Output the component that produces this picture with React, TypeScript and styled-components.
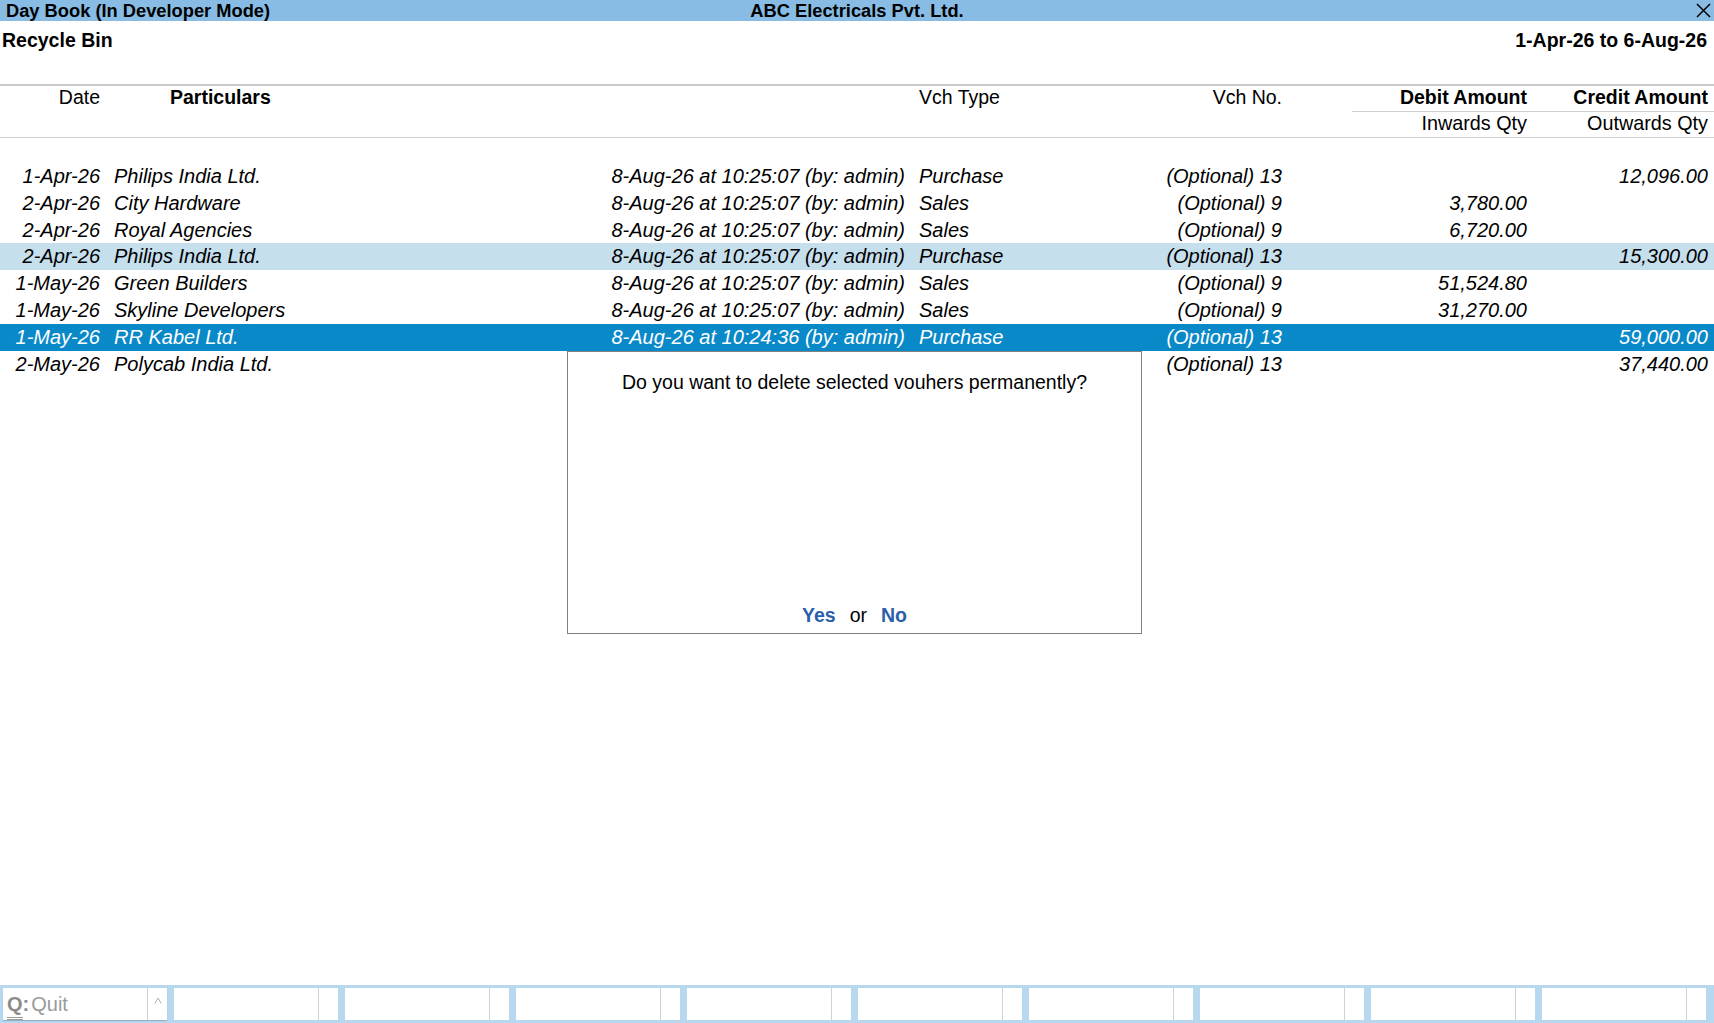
import React from "react";
import styled, { createGlobalStyle } from "styled-components";

const GlobalStyle = createGlobalStyle`
  html, body { margin: 0; padding: 0; background: #ffffff; }
  body { font-family: "Liberation Sans", Arial, sans-serif; color: #000; }
  * { box-sizing: border-box; }
`;

const COLS = "100px 440px 365px 195px 182px 70px 175px 187px";

const Page = styled.div`
  position: relative;
  width: 1714px;
  height: 1023px;
  display: flex;
  flex-direction: column;
  overflow: hidden;
  background: #fff;
`;

const TitleBar = styled.div`
  height: 21px;
  flex: none;
  background: #88bce4;
  display: grid;
  grid-template-columns: 1fr auto 1fr;
  align-items: center;
  font-weight: bold;
  font-size: 18.3px;
  line-height: 21px;
  white-space: nowrap;
`;

const TitleLeft = styled.div`
  padding-left: 6px;
`;

const TitleCenter = styled.div``;

const TitleRight = styled.div`
  display: flex;
  justify-content: flex-end;
  align-items: center;
  padding-right: 3px;
  height: 21px;
`;

const SubHeader = styled.div`
  flex: none;
  height: 65px;
  padding: 8px 7px 0 2px;
  display: flex;
  justify-content: space-between;
  align-items: flex-start;
  font-weight: bold;
  font-size: 19.5px;
  line-height: 22px;
  border-bottom: 2px solid #c8c8c8;
`;

const HeadRow = styled.div`
  flex: none;
  display: grid;
  grid-template-columns: ${COLS};
  height: 25px;
  font-size: 19.5px;
  line-height: 22px;
  white-space: nowrap;
`;

const SubHeadRow = styled.div`
  flex: none;
  display: grid;
  grid-template-columns: ${COLS};
  height: 27px;
  font-size: 19.8px;
  line-height: 22px;
  white-space: nowrap;
  border-bottom: 1px solid #cfcfcf;
`;

type CellProps = { $align?: "left" | "right"; $pl?: number; $pr?: number; $bold?: boolean; $col?: number; $rule?: boolean };

const Cell = styled.div<CellProps>`
  text-align: ${(p) => p.$align || "left"};
  padding-left: ${(p) => p.$pl || 0}px;
  padding-right: ${(p) => p.$pr || 0}px;
  font-weight: ${(p) => (p.$bold ? "bold" : "normal")};
  ${(p) => (p.$col ? `grid-column: ${p.$col};` : "")}
  ${(p) => (p.$rule ? "border-top: 1px solid #cfcfcf;" : "")}
  overflow: visible;
`;

const Body = styled.div`
  flex: 1;
  padding-top: 25px;
  display: flex;
  flex-direction: column;
`;

type RowKind = "plain" | "hover" | "selected";

const Row = styled.div<{ $kind: RowKind }>`
  display: grid;
  grid-template-columns: ${COLS};
  height: 26.8px;
  font-size: 20px;
  line-height: 26.8px;
  font-style: italic;
  white-space: nowrap;
  background: ${(p) => (p.$kind === "selected" ? "#0a89c9" : p.$kind === "hover" ? "#c6dfed" : "transparent")};
  color: ${(p) => (p.$kind === "selected" ? "#ffffff" : "#000000")};
`;

const Footer = styled.div`
  flex: none;
  height: 38px;
  background: #b8d8f0;
  padding: 3px 8px 3px 3px;
  display: flex;
  gap: 7px;
`;

const FKey = styled.div<{ $raised?: boolean }>`
  width: 164px;
  height: 32px;
  background: #fff;
  display: flex;
  ${(p) => (p.$raised ? "box-shadow: 0 1px 1px rgba(0,0,0,0.18);" : "")}
`;

const FLabel = styled.div`
  width: 145px;
  border-right: 1px solid #d2d2d2;
  display: flex;
  align-items: center;
  padding-left: 4px;
  font-size: 20px;
  color: #9a9a9a;
`;

const FMore = styled.div`
  flex: 1;
  display: flex;
  align-items: flex-start;
  justify-content: center;
  padding-top: 9px;
`;

const HotKey = styled.span`
  font-weight: bold;
  color: #8c8c8c;
  display: inline-block;
  line-height: 20px;
  border-bottom: 3px double #9a9a9a;
  margin-bottom: -6px;
  padding-bottom: 3px;
`;

const Colon = styled.span`
  font-weight: bold;
  color: #8c8c8c;
  margin-right: 2px;
`;

const Dialog = styled.div`
  position: absolute;
  left: 567px;
  top: 351px;
  width: 575px;
  height: 283px;
  background: #fff;
  border: 1px solid #808080;
  display: flex;
  flex-direction: column;
  align-items: center;
  justify-content: space-between;
  padding: 19px 0 7px;
  font-size: 19.5px;
  line-height: 22px;
`;

const Choices = styled.div`
  display: flex;
  align-items: baseline;
`;

const Choice = styled.span`
  font-weight: bold;
  color: #2c5fab;
`;

const Or = styled.span`
  margin: 0 14px;
`;

type Entry = {
  date: string;
  party: string;
  info: string;
  type: string;
  no: string;
  debit: string;
  credit: string;
  kind: RowKind;
};

const ts = "8-Aug-26 at 10:25:07 (by: admin)";
const ts2 = "8-Aug-26 at 10:24:36 (by: admin)";

const entries: Entry[] = [
  { date: "1-Apr-26", party: "Philips India Ltd.", info: ts, type: "Purchase", no: "(Optional) 13", debit: "", credit: "12,096.00", kind: "plain" },
  { date: "2-Apr-26", party: "City Hardware", info: ts, type: "Sales", no: "(Optional) 9", debit: "3,780.00", credit: "", kind: "plain" },
  { date: "2-Apr-26", party: "Royal Agencies", info: ts, type: "Sales", no: "(Optional) 9", debit: "6,720.00", credit: "", kind: "plain" },
  { date: "2-Apr-26", party: "Philips India Ltd.", info: ts, type: "Purchase", no: "(Optional) 13", debit: "", credit: "15,300.00", kind: "hover" },
  { date: "1-May-26", party: "Green Builders", info: ts, type: "Sales", no: "(Optional) 9", debit: "51,524.80", credit: "", kind: "plain" },
  { date: "1-May-26", party: "Skyline Developers", info: ts, type: "Sales", no: "(Optional) 9", debit: "31,270.00", credit: "", kind: "plain" },
  { date: "1-May-26", party: "RR Kabel Ltd.", info: ts2, type: "Purchase", no: "(Optional) 13", debit: "", credit: "59,000.00", kind: "selected" },
  { date: "2-May-26", party: "Polycab India Ltd.", info: "", type: "", no: "(Optional) 13", debit: "", credit: "37,440.00", kind: "plain" },
];

const CloseIcon = () => (
  <svg width="15" height="15" viewBox="0 0 15 15">
    <path d="M1 1 L14 14 M14 1 L1 14" stroke="#000" strokeWidth="1.5" fill="none" />
  </svg>
);

const ChevronUp = () => (
  <svg width="8" height="7" viewBox="0 0 8 7">
    <path d="M0.8 6.5 L4 1 L7.2 6.5" stroke="#b0b0b0" strokeWidth="1" fill="none" />
  </svg>
);

export default function App() {
  return (
    <>
      <GlobalStyle />
      <Page>
        <TitleBar>
          <TitleLeft>Day Book (In Developer Mode)</TitleLeft>
          <TitleCenter>ABC Electricals Pvt. Ltd.</TitleCenter>
          <TitleRight>
            <CloseIcon />
          </TitleRight>
        </TitleBar>
        <SubHeader>
          <span>Recycle Bin</span>
          <span>1-Apr-26 to 6-Aug-26</span>
        </SubHeader>
        <HeadRow>
          <Cell $align="right">Date</Cell>
          <Cell $pl={70} $bold>Particulars</Cell>
          <Cell />
          <Cell $pl={14}>Vch Type</Cell>
          <Cell $align="right">Vch No.</Cell>
          <Cell />
          <Cell $align="right" $bold>Debit Amount</Cell>
          <Cell $align="right" $pr={6} $bold>Credit Amount</Cell>
        </HeadRow>
        <SubHeadRow>
          <Cell $col={7} $align="right" $rule>Inwards Qty</Cell>
          <Cell $col={8} $align="right" $pr={6} $rule>Outwards Qty</Cell>
        </SubHeadRow>
        <Body>
          {entries.map((e, i) => (
            <Row key={i} $kind={e.kind}>
              <Cell $align="right">{e.date}</Cell>
              <Cell $pl={14}>{e.party}</Cell>
              <Cell $align="right">{e.info}</Cell>
              <Cell $pl={14}>{e.type}</Cell>
              <Cell $align="right">{e.no}</Cell>
              <Cell />
              <Cell $align="right">{e.debit}</Cell>
              <Cell $align="right" $pr={6}>{e.credit}</Cell>
            </Row>
          ))}
        </Body>
        <Footer>
          {Array.from({ length: 10 }).map((_, i) => (
            <FKey key={i} $raised={i === 0}>
              <FLabel>
                {i === 0 && (
                  <>
                    <HotKey>Q</HotKey>
                    <Colon>:</Colon>
                    <span>Quit</span>
                  </>
                )}
              </FLabel>
              <FMore>{i === 0 && <ChevronUp />}</FMore>
            </FKey>
          ))}
        </Footer>
        <Dialog>
          <div>Do you want to delete selected vouhers permanently?</div>
          <Choices>
            <Choice>Yes</Choice>
            <Or>or</Or>
            <Choice>No</Choice>
          </Choices>
        </Dialog>
      </Page>
    </>
  );
}
